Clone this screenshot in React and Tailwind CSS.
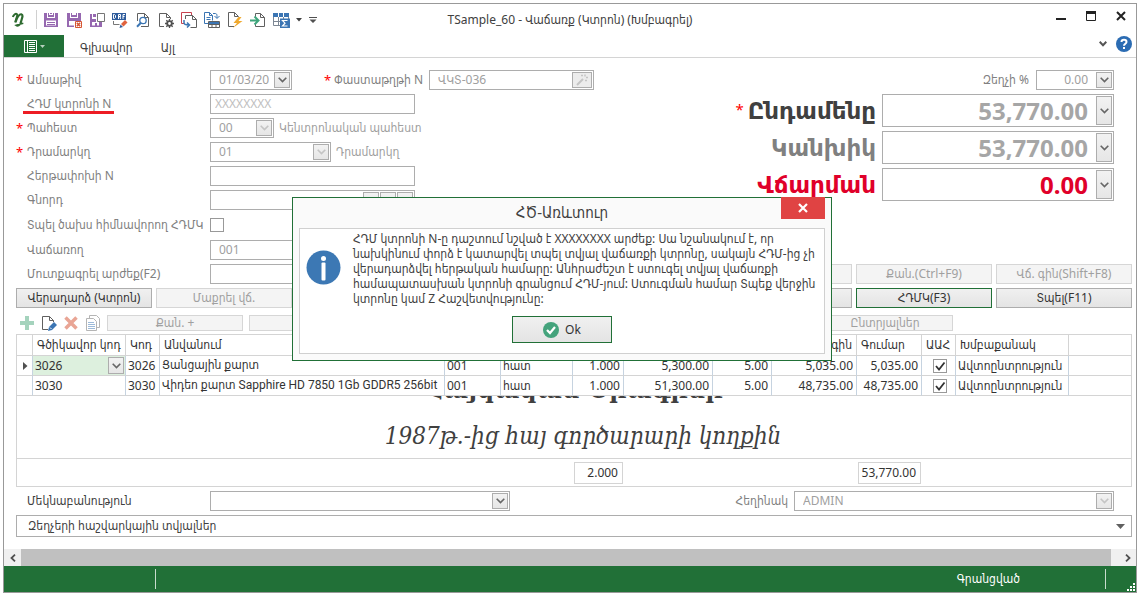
import React from "react";
import { useState } from "react";
import clsx from "clsx";

const ROWS = [
  {
    code: "3026",
    name: "Ցանցային քարտ",
    store: "001",
    unit: "հատ",
    qty: "1.000",
    price: "5,300.00",
    discount: "5.00",
    net: "5,035.00",
    total: "5,035.00",
  },
  {
    code: "3030",
    name: "Վիդեո քարտ Sapphire HD 7850 1Gb GDDR5 256bit",
    store: "001",
    unit: "հատ",
    qty: "1.000",
    price: "51,300.00",
    discount: "5.00",
    net: "48,735.00",
    total: "48,735.00",
  },
];

const HEADERS = [
  { text: "", width: "w-[16px]" },
  { text: "Գծիկավոր կոդ", width: "w-[93px]" },
  { text: "Կոդ", width: "w-[34px]" },
  { text: "Անվանում", width: "w-[285px]" },
  { text: "", width: "w-[56px]" },
  { text: "", width: "w-[72px]" },
  { text: "", width: "w-[51px]" },
  { text: "", width: "w-[89px]" },
  { text: "", width: "w-[59px]" },
  { text: "Զեղչված գին", width: "w-[85px]", right: true },
  { text: "Գումար", width: "w-[65px]" },
  { text: "ԱԱՀ", width: "w-[34px]" },
  { text: "Խմբաքանակ", width: "w-[113px]" },
];

const TOTALS = [
  { id: "total", label: "Ընդամենը", value: "53,770.00", text: "text-[#404040]", input: "text-[#a6a6a6]", required: true },
  { id: "cash", label: "Կանխիկ", value: "53,770.00", text: "text-[#808080]", input: "text-[#a6a6a6]" },
  { id: "due", label: "Վճարման", value: "0.00", text: "text-[#e0002a]", input: "text-[#e0002a]" },
];

function Chevron({ light }) {
  return (
    <svg width="9" height="6" viewBox="0 0 9 6" fill="none" stroke={light ? "#c4c4c4" : "#666"} strokeWidth="1.6">
      <path d="M0.7 0.8 L4.5 4.6 L8.3 0.8" />
    </svg>
  );
}

function DropBox({ light, className }) {
  return (
    <span
      className={clsx(
        "flex w-4 shrink-0 items-center justify-center border border-[#adadad] bg-linear-to-b from-[#f2f2f2] to-[#e6e6e6]",
        className
      )}
    >
      <Chevron light={light} />
    </span>
  );
}

function SelectField({ id, value, light, className }) {
  return (
    <div className={clsx("relative h-5 border border-[#adadad] bg-white", className)}>
      <select id={id} className="h-full w-full appearance-none pl-2 leading-[18px] text-[#a0a0a0] outline-none">
        <option>{value}</option>
      </select>
      <DropBox light={light} className="pointer-events-none absolute inset-y-px right-px" />
    </div>
  );
}

function TextField({ id, value, className, inputClass, children }) {
  return (
    <div className={clsx("flex border border-[#adadad] bg-white p-px", className)}>
      <input id={id} defaultValue={value} className={clsx("min-w-0 flex-1 bg-transparent outline-none", inputClass)} />
      {children}
    </div>
  );
}

function FormRow({ id, label, required, marked, children }) {
  return (
    <div className="flex h-5 items-center">
      <span className="w-[11px] text-[13px] leading-5 text-[#ff0000]">{required ? "*" : ""}</span>
      <label htmlFor={id} className="relative w-[183px] shrink-0 leading-5">
        {label}
        {marked && <span className="absolute -left-1 bottom-0 h-[3px] w-[91px] bg-[#ed1c24]" />}
      </label>
      {children}
    </div>
  );
}

function PushButton({ disabled, primary, className, onClick, children }) {
  return (
    <button
      disabled={disabled}
      onClick={onClick}
      className={clsx(
        "border whitespace-nowrap",
        disabled && "border-[#d6d6d6] bg-[#f4f4f4] text-[#a0a0a0]",
        !disabled && "bg-linear-to-b from-[#f0f0f0] to-[#e4e4e4] text-[#333]",
        !disabled && (primary ? "border-[#217037]" : "border-[#adadad]"),
        className
      )}
    >
      {children}
    </button>
  );
}

function Icon({ children, label }) {
  return (
    <button aria-label={label} className="h-4 w-4">
      <svg width="16" height="16" viewBox="0 0 16 16" fill="none">
        {children}
      </svg>
    </button>
  );
}

const Page = ({ d = "M11 15H2.5V1.5h6l4 4V8M8.5 1.5v4h4" }) => <path d={d} stroke="#606060" />;

function QuickAccess() {
  return (
    <div className="flex items-center gap-[7px]">
      <Icon label="Save">
        <path d="M1 1h3v5h8V1h3v14H1z" fill="#9668b0" />
        <path d="M5 1h1v2h4V1h1v4H5zM7 1h2v1H7z" fill="#9668b0" />
        <path d="M3 8.500h10v5H3z" fill="#fff" />
        <path d="M4 10.500h8M4 12.500h8" stroke="#9668b0" />
      </Icon>
      <Icon label="Save and close">
        <path d="M1 1h3v5h8V1h3v8H8v6H1z" fill="#9668b0" />
        <path d="M5 1h1v2h4V1h1v4H5z" fill="#9668b0" />
        <path d="M3 9h5v4.500H3z" fill="#fff" />
        <path d="M9.500 9.500h6v6h-6z" stroke="#d65532" fill="#fff" />
        <path d="M10.800 10.800l3.400 3.400M14.200 10.800l-3.400 3.400" stroke="#d65532" strokeWidth="1.500" />
      </Icon>
      <Icon label="Save and new">
        <path d="M1 2h2v5h4v3h6v5H1z" fill="#9668b0" />
        <path d="M3 10h7v3.500H3z" fill="#fff" />
        <path d="M6 11h2v3H6z" fill="#9668b0" />
        <path d="M8.500 1.500h7v8h-7z" stroke="#777" fill="#fff" />
        <path d="M4 2h3v3H4z" fill="#9668b0" />
      </Icon>
      <Icon label="Edit form">
        <path d="M0 1h14v7H0z" fill="#2f5c9c" />
        <path d="M1.500 6.500v-4h1l1 1v2l-1 1zM6.500 7V2.500h2v2h-2M8 4.500L8.500 7M11 7V2.500h2M11 4.500h1.500" stroke="#fff" />
        <path d="M1.500 9v3.500h6" stroke="#777" />
        <path d="M9 12l4-4 2.500 2.500-4 4z" fill="#e0623d" />
        <path d="M8.500 12.500l2.500 2.500-3.500 1z" fill="#2f5c9c" />
      </Icon>
      <Icon label="Preview">
        <Page d="M2.500 9V1.500h7l4 4v9H6M9.500 1.500v4h4" />
        <circle cx="8" cy="8.500" r="3.200" stroke="#3b75b3" strokeWidth="1.300" fill="#fff" />
        <path d="M5.700 11L2 14.700" stroke="#3b75b3" strokeWidth="2" />
      </Icon>
      <Icon label="Page setup">
        <Page d="M6 14.500H1.500V1.500h7l4 4V7M8.500 1.500v4h4" />
        <path d="M11.500 7v9M7 11.500h9M8.300 8.300l6.400 6.400M14.700 8.300l-6.400 6.400" stroke="#505050" strokeWidth="1.300" />
        <circle cx="11.500" cy="11.500" r="2.300" stroke="#505050" strokeWidth="1.800" fill="#fff" />
      </Icon>
      <Icon label="Create from">
        <path d="M3 11.500H.5V.5h10V3" stroke="#c8414e" />
        <path d="M4.500 7V3.500h7l4 4v8h-6M11.500 3.500v4h4" stroke="#606060" />
        <path d="M3 8v2.500c0 2 1 2.500 5 2.500M6 10.500L8.500 13 6 15.500" stroke="#3b75b3" strokeWidth="1.500" />
      </Icon>
      <Icon label="Copy rows">
        <path d="M4 11.500H.5v-11h5l3 3v5M5.500.5v3h3M2.500 5.500h4M2.500 7.500h4" stroke="#3b75b3" />
        <path d="M9 1.500h2c2 0 2 1 2 4.500M10.500 4L13 6.500 15.500 4" stroke="#3b75b3" />
        <path d="M4.500 9.500h11v6h-11zM4.500 12.500h11M8 9.500v6M12 9.500v6" stroke="#606060" />
        <path d="M5 10h10v2H5z" fill="#3b75b3" />
      </Icon>
      <Icon label="Run">
        <Page d="M7 14.500H1.500V.5h6l4 4M7.500.5v4h4" />
        <path d="M11.500 5L6.500 11h3.500l-4 5 9.500-7h-4l3-4z" fill="#f0a92e" />
      </Icon>
      <Icon label="Export">
        <path d="M5.500 5V1.500h5l4 4v9h-9V12M10.500 1.500v4h4" stroke="#606060" />
        <path d="M0 8.500h8M4.500 4.500l4 4-4 4" stroke="#3fa57c" strokeWidth="2" />
      </Icon>
      <button aria-label="Summary table" className="flex items-center gap-[6px]">
        <svg width="17" height="16" viewBox="0 0 17 16" fill="none">
          <path d="M.5 3.500h15v10H.5zM5.500 1v13M10.500 1v8M.5 9.500h15" stroke="#7d8794" />
          <path d="M0 1h16v4H0z" fill="#3b75b3" />
          <path d="M5.500 1v4M10.500 1v4" stroke="#fff" />
          <path d="M7 6.500h10V16H7z" fill="#3b75b3" />
          <path d="M14.500 8.500h-5l2.500 2.700-2.500 2.800h5" stroke="#fff" strokeWidth="1.200" />
        </svg>
        <svg width="6" height="4" viewBox="0 0 6 4">
          <path d="M0 0h6L3 3.500z" fill="#404040" />
        </svg>
      </button>
      <button aria-label="Customize">
        <svg width="8" height="6" viewBox="0 0 8 6">
          <path d="M0 0h8v1H0zM0.500 2.500h7L4 6z" fill="#505050" />
        </svg>
      </button>
    </div>
  );
}

function TitleBar() {
  return (
    <div className="relative flex h-[31px] items-center pl-2">
      <svg width="13" height="16" viewBox="0 0 13 16" fill="none">
        <path d="M.8 5C1.500 3 3.500 1.200 4.800 2c1 .8 0 3-.5 4.500L3.200 10.500" stroke="#2e6b30" strokeWidth="2" />
        <path d="M3.500 10C5.500 4.500 7.500 2 9.300 2.300c2 .5 1 3 .5 4.700L8.500 11.500" stroke="#2e6b30" strokeWidth="2.200" />
        <path d="M8.800 10.500c-.8 3-3 4.500-5 2.800l7.500-2" stroke="#2e6b30" strokeWidth="1.500" />
      </svg>
      <span className="mr-[6px] ml-[11px] h-[19px] w-px bg-[#d0d0d0]" />
      <QuickAccess />
      <h1 className="pointer-events-none absolute inset-x-0 text-center text-[12px] leading-4 text-[#404040]">
        TSample_60 - Վաճառք (Կտրոն) (Խմբագրել)
      </h1>
      <div className="mr-[10px] ml-auto flex items-center gap-5 pb-2">
        <button aria-label="Minimize">
          <svg width="10" height="11" viewBox="0 0 10 11">
            <path d="M0 8h10v2H0z" fill="#222" />
          </svg>
        </button>
        <button aria-label="Maximize">
          <svg width="10" height="10" viewBox="0 0 10 10">
            <path d="M.5 1.500h9v8h-9z" fill="none" stroke="#222" />
            <path d="M0 0h10v3H0z" fill="#222" />
          </svg>
        </button>
        <button aria-label="Close">
          <svg width="10" height="10" viewBox="0 0 10 10">
            <path d="M1 1l8 8M9 1L1 9" stroke="#222" strokeWidth="2" />
          </svg>
        </button>
      </div>
    </div>
  );
}

function Ribbon() {
  return (
    <nav className="flex h-[23px] items-center border-b border-[#d4d4d4] text-[#404040]">
      <button aria-label="Menu" className="flex h-full w-[60px] items-center justify-center gap-[3px] self-start bg-[#217037]">
        <svg width="13" height="13" viewBox="0 0 13 13" fill="none">
          <path d="M.5.5h12v12H.5zM3.500 0v13" stroke="#fff" />
          <path d="M5 2.500h6M5 4.500h6M5 6.500h6M5 8.500h6M5 10.500h6" stroke="#fff" />
        </svg>
        <svg width="5" height="3" viewBox="0 0 5 3">
          <path d="M0 0h5L2.500 3z" fill="#b9d1bf" />
        </svg>
      </button>
      <button className="ml-4 pt-1">Գլխավոր</button>
      <button className="ml-7 pt-1">Այլ</button>
      <div className="mr-1 ml-auto flex items-center gap-[9px] pb-1">
        <button aria-label="Collapse">
          <svg width="8" height="6" viewBox="0 0 8 6" fill="none" stroke="#555" strokeWidth="2">
            <path d="M0.7 0.8L4 4.200 7.300 0.800" />
          </svg>
        </button>
        <button aria-label="Help">
          <svg width="16" height="16" viewBox="0 0 16 16" fill="none">
            <circle cx="8" cy="8" r="8" fill="#2b6cb3" />
            <path d="M5.500 6c0-3 5-3 5 0 0 1.800-2.500 1.700-2.500 3.800" stroke="#fff" strokeWidth="2" />
            <path d="M7 11h2v2H7z" fill="#fff" />
          </svg>
        </button>
      </div>
    </nav>
  );
}

function HeaderForm() {
  return (
    <div className="flex justify-between text-[#808080]">
      <div className="flex flex-col gap-1">
        <FormRow id="date" label="Ամսաթիվ" required>
          <TextField id="date" value="01/03/20" className="h-5 w-[82px]" inputClass="pl-[7px] text-[#a0a0a0]">
            <button aria-label="Pick date" className="flex">
              <DropBox />
            </button>
          </TextField>
          <span className="ml-8 w-[10px] text-[13px] leading-5 text-[#ff0000]">*</span>
          <label htmlFor="doc" className="w-[95px] whitespace-nowrap">
            Փաստաթղթի N
          </label>
          <TextField id="doc" value="ՎԿՏ-036" className="h-5 w-[165px]" inputClass="pl-[7px] text-[#a0a0a0]">
            <button aria-label="Generate" className="flex w-5 items-center justify-center border border-[#adadad] bg-[#ececec]">
              <svg width="12" height="12" viewBox="0 0 12 12" fill="none" stroke="#c4c4c4">
                <path d="M1 11l6-6" strokeWidth="2" />
                <path d="M5 1.500h2M9 .5v2M9 6.500h2M10 3.500h2" strokeWidth="1.500" />
              </svg>
            </button>
          </TextField>
        </FormRow>
        <FormRow id="receipt" label="ՀԴՄ կտրոնի N" marked>
          <TextField id="receipt" value="XXXXXXXX" className="h-5 w-[205px]" inputClass="pl-[3px] text-[#c0c0c0]" />
        </FormRow>
        <FormRow id="store" label="Պահեստ" required>
          <SelectField id="store" value="00" light className="w-[64px]" />
          <span className="ml-[5px] text-[#a0a0a0]">Կենտրոնական պահեստ</span>
        </FormRow>
        <FormRow id="desk" label="Դրամարկղ" required>
          <SelectField id="desk" value="01" light className="w-[121px]" />
          <span className="ml-[5px] text-[#a0a0a0]">Դրամարկղ</span>
        </FormRow>
        <FormRow id="shift" label="Հերթափոխի N">
          <TextField id="shift" className="h-5 w-[205px]" inputClass="pl-[7px]" />
        </FormRow>
        <FormRow id="buyer" label="Գնորդ">
          <TextField id="buyer" className="h-5 w-[205px] gap-px" inputClass="pl-[7px]">
            <DropBox light />
            <DropBox light />
            <DropBox light />
          </TextField>
        </FormRow>
        <div className="flex h-[22px] items-center pl-[11px]">
          <label htmlFor="print" className="w-[183px] whitespace-nowrap leading-5">
            Տպել ծախս հիմնավորող ՀԴՄԿ
          </label>
          <input id="print" type="checkbox" className="h-[14px] w-[14px] appearance-none border border-[#999] bg-white" />
        </div>
        <FormRow id="seller" label="Վաճառող">
          <SelectField id="seller" value="001" light className="w-[205px]" />
        </FormRow>
        <FormRow id="entry" label="Մուտքագրել արժեք(F2)">
          <TextField id="entry" className="h-5 w-[205px]" />
        </FormRow>
      </div>

      <div className="flex flex-col justify-between">
        <div className="mr-[18px] flex flex-col items-end gap-1">
          <div className="flex items-center gap-[7px]">
            <label htmlFor="percent">Զեղչի %</label>
            <TextField id="percent" value="0.00" className="h-5 w-[78px]" inputClass="pr-2 text-right text-[#a0a0a0]">
              <button aria-label="Open calculator" className="flex">
                <DropBox />
              </button>
            </TextField>
          </div>
          {TOTALS.map((item) => (
            <div key={item.id} className="flex items-center gap-[6px]">
              <label
                htmlFor={item.id}
                className={clsx("flex font-['DejaVu_Sans'] text-[23px] leading-8 font-bold", item.text)}
              >
                {item.required && (
                  <span className="mr-1 font-['Noto_Sans'] text-[15px] leading-7 font-normal text-[#ff0000]">*</span>
                )}
                {item.label}
              </label>
              <TextField
                id={item.id}
                value={item.value}
                className="h-[33px] w-[232px]"
                inputClass={clsx("pr-2 text-right text-[24px] font-bold", item.input)}
              >
                <button aria-label="Open calculator" className="flex">
                  <DropBox />
                </button>
              </TextField>
            </div>
          ))}
        </div>
        <div className="grid w-[416px] grid-cols-3 gap-1">
          <PushButton disabled className="h-5" />
          <PushButton disabled className="h-5">
            Քան.(Ctrl+F9)
          </PushButton>
          <PushButton disabled className="h-5">
            Վճ. գին(Shift+F8)
          </PushButton>
        </div>
      </div>
    </div>
  );
}

function GridToolbar() {
  return (
    <div className="mt-[7px] flex h-4 items-center">
      <div className="flex w-[91px] gap-[6px] pl-[3px]">
        <Icon label="Add">
          <path d="M6 1h4v5h5v4h-5v5H6v-5H1V6h5z" fill="#a5d3bd" />
        </Icon>
        <Icon label="Edit">
          <Page d="M7 14.500H1.500V1.500h7l4 4V7M8.500 1.500v4h4" />
          <path d="M8 12l5-5 3 3-5 5-4 1z" fill="#3b75b3" />
          <path d="M9 12.500l1.500 1.500" stroke="#fff" />
        </Icon>
        <Icon label="Delete">
          <path d="M2.500 2.500l11 11M13.500 2.500l-11 11" stroke="#e9a595" strokeWidth="3.500" />
        </Icon>
        <Icon label="Copy">
          <path d="M4.500 3V.5h7l3 3v9H12" stroke="#b5b5b5" />
          <path d="M1.500 3.500h7l3 3v9h-10z" fill="#fff" stroke="#b5b5b5" />
          <path d="M3 7.500h6M3 9.500h7M3 11.500h7M3 13.500h7" stroke="#9dbad9" />
        </Icon>
      </div>
      <div className="flex gap-[6px]">
        <PushButton disabled className="h-4 w-[136px] leading-[14px]">
          Քան. +
        </PushButton>
        <PushButton disabled className="h-4 w-[136px]" />
        <PushButton disabled className="h-4 w-[136px]" />
        <PushButton disabled className="h-4 w-[136px]" />
        <PushButton disabled className="h-4 w-[136px]" />
        <PushButton disabled className="h-4 w-[136px] leading-[14px]">
          Ընտրյալներ
        </PushButton>
      </div>
    </div>
  );
}

function Cell({ right, className, children }) {
  return (
    <td
      className={clsx(
        "h-5 overflow-hidden border-r border-b border-r-[#c6d3e0] border-b-[#d4d4d4] p-0 leading-[19px] whitespace-nowrap",
        right ? "pr-[3px] text-right" : "pl-[2px]",
        className
      )}
    >
      {children}
    </td>
  );
}

function ItemsGrid() {
  return (
    <div className="mt-[3px] border border-[#d4d4d4] text-[#333]">
      <table className="w-full table-fixed border-separate border-spacing-0">
        <thead>
          <tr>
            {HEADERS.map((head, index) => (
              <th
                key={index}
                className={clsx(
                  "h-[21px] overflow-hidden border-r border-b border-[#d4d4d4] p-0 leading-5 font-normal whitespace-nowrap",
                  head.right ? "pr-1 text-right" : "pl-1 text-left",
                  head.width
                )}
              >
                {head.text}
              </th>
            ))}
            <th className="border-b border-[#d4d4d4] p-0" />
          </tr>
        </thead>
        <tbody>
          {ROWS.map((row, index) => (
            <tr key={row.code}>
              <Cell>
                {index === 0 && (
                  <svg className="ml-1" width="5" height="8" viewBox="0 0 5 8">
                    <path d="M0 0l4.500 4L0 8z" fill="#505050" />
                  </svg>
                )}
              </Cell>
              <Cell className={index === 0 ? "bg-[#ddf0de]" : ""}>
                <div className="flex h-[19px] justify-between py-px leading-[17px]">
                  {row.code}
                  {index === 0 && <DropBox className="mr-px" />}
                </div>
              </Cell>
              <Cell>{row.code}</Cell>
              <Cell className="font-['Roboto','DejaVu_Sans_Condensed',sans-serif]">{row.name}</Cell>
              <Cell>{row.store}</Cell>
              <Cell>{row.unit}</Cell>
              <Cell right>{row.qty}</Cell>
              <Cell right>{row.price}</Cell>
              <Cell right>{row.discount}</Cell>
              <Cell right>{row.net}</Cell>
              <Cell right>{row.total}</Cell>
              <Cell>
                <label className="relative mx-auto block h-[14px] w-[14px]">
                  <input
                    type="checkbox"
                    defaultChecked
                    aria-label="ԱԱՀ"
                    className="block h-[14px] w-[14px] appearance-none border border-[#999]"
                  />
                  <svg className="pointer-events-none absolute inset-0" width="14" height="14" viewBox="0 0 14 14">
                    <path d="M3 7l3 3.500L11.500 3.500" fill="none" stroke="#333" strokeWidth="1.800" />
                  </svg>
                </label>
              </Cell>
              <Cell>Ավտոընտրություն</Cell>
              <td className="border-b border-[#d4d4d4] p-0" />
            </tr>
          ))}
        </tbody>
      </table>
      {/* company slogan behind the empty part of the grid */}
      <div className="flex h-[62px] flex-col items-center overflow-hidden whitespace-nowrap text-[#404040]">
        <p className="-mt-[18px] font-['DejaVu_Serif'] text-[24px] leading-6 font-bold">Հայկական Ծրագրեր</p>
        <p className="mt-[14px] pl-[18px] font-['DejaVu_Serif_Condensed'] text-[24px] leading-10 italic">
          1987թ.-ից հայ գործարարի կողքին
        </p>
      </div>
      <div className="flex h-7 items-start border-t border-[#d4d4d4] pt-[3px] leading-[20px]">
        <span className="ml-[557px] h-[22px] w-[49px] border border-[#d4d4d4] pr-1 text-right">2.000</span>
        <span className="ml-[235px] h-[22px] w-[63px] border border-[#d4d4d4] pr-1 text-right">53,770.00</span>
      </div>
    </div>
  );
}

function MessageDialog({ closeDialog }) {
  return (
    <div
      role="dialog"
      aria-labelledby="dialog-title"
      className="absolute top-[197px] left-[292px] w-[540px] border border-[#217037] bg-[#fafafa] px-[6px] pb-[6px] text-[#404040]"
    >
      <div className="relative flex h-[30px] justify-center">
        <h2 id="dialog-title" className="text-[15px] leading-[29px]">
          ՀԾ-Առևտուր
        </h2>
        <button
          aria-label="Close dialog"
          onClick={closeDialog}
          className="absolute -top-px right-0 flex h-[22px] w-[44px] items-center justify-center bg-[#e04343]"
        >
          <svg width="10" height="10" viewBox="0 0 10 10">
            <path d="M1 1l8 8M9 1L1 9" stroke="#fff" strokeWidth="2.200" />
          </svg>
        </button>
      </div>
      <div className="flex h-[126px] flex-col items-center border border-[#d0d0d0] bg-white">
        <div className="flex w-full pt-[2px] pl-[6px]">
          <svg className="mt-[19px] shrink-0" width="35" height="35" viewBox="0 0 35 35">
            <circle cx="17.500" cy="17.500" r="17" fill="#3c78b4" />
            <circle cx="17.500" cy="8.500" r="2.500" fill="#fff" />
            <rect x="15.500" y="12.500" width="4" height="18" rx="1" fill="#fff" />
          </svg>
          <p className="ml-3 leading-[15px] whitespace-nowrap">
            ՀԴՄ կտրոնի N-ը դաշտում նշված է XXXXXXXX արժեք: Սա նշանակում է, որ
            <br />
            նախկինում փորձ է կատարվել տպել տվյալ վաճառքի կտրոնը, սակայն ՀԴՄ-ից չի
            <br />
            վերադարձվել հերթական համարը: Անհրաժեշտ է ստուգել տվյալ վաճառքի
            <br />
            համապատասխան կտրոնի գրանցում ՀԴՄ-յում: Ստուգման համար Տպեք վերջին
            <br />
            կտրոնը կամ Z Հաշվետվությունը:
          </p>
        </div>
        <PushButton
          primary
          onClick={closeDialog}
          className="mt-[10px] flex h-[27px] w-[100px] shrink-0 items-center justify-center gap-[6px]"
        >
          <svg width="16" height="16" viewBox="0 0 16 16">
            <circle cx="8" cy="8" r="8" fill="#44a37c" />
            <path d="M4 8l3 3 5-6" fill="none" stroke="#fff" strokeWidth="2.200" />
          </svg>
          Ok
        </PushButton>
      </div>
    </div>
  );
}

function App() {
  const [openDialog, setOpenDialog] = useState(true);

  return (
    <div className="relative bg-white p-[3px] font-['Noto_Sans','DejaVu_Sans_Condensed',sans-serif] text-[12px] leading-4">
      <div className="border border-[#999]">
        <TitleBar />
        <Ribbon />
        <main className="px-3 pt-3 pr-1">
          <HeaderForm />
          <div className="mt-1 grid grid-cols-8 gap-1">
            <PushButton className="h-5">Վերադարձ (Կտրոն)</PushButton>
            <PushButton disabled className="h-5">
              Մաքրել վճ.
            </PushButton>
            <PushButton className="col-start-6 h-5" />
            <PushButton primary className="h-5">
              ՀԴՄԿ(F3)
            </PushButton>
            <PushButton className="h-5">Տպել(F11)</PushButton>
          </div>
          <GridToolbar />
          <ItemsGrid />
          <div className="mt-1 mr-[18px] flex items-center text-[#404040]">
            <label htmlFor="comment" className="w-[194px] pl-[11px]">
              Մեկնաբանություն
            </label>
            <SelectField id="comment" className="w-[300px]" />
            <label htmlFor="author" className="mr-[6px] ml-auto text-[#808080]">
              Հեղինակ
            </label>
            <SelectField id="author" value="ADMIN" light className="w-[320px]" />
          </div>
          <button className="mt-1 flex h-[22px] w-full items-center justify-between border border-[#adadad] pr-[6px] pl-[11px] text-[#404040]">
            Զեղչերի հաշվարկային տվյալներ
            <svg width="9" height="5" viewBox="0 0 9 5">
              <path d="M0 0h9L4.500 5z" fill="#606060" />
            </svg>
          </button>
        </main>
        <div className="mt-3 flex h-[17px] items-stretch bg-[#f0f0f0]">
          <button aria-label="Scroll left" className="flex w-[17px] items-center justify-center">
            <svg width="6" height="8" viewBox="0 0 6 8">
              <path d="M5 .7L1.500 4 5 7.300" fill="none" stroke="#505050" strokeWidth="1.800" />
            </svg>
          </button>
          <div className="mr-2 flex-1 bg-[#c0c0c0]" />
          <button aria-label="Scroll right" className="flex w-[17px] items-center justify-center">
            <svg width="6" height="8" viewBox="0 0 6 8">
              <path d="M1 .7L4.500 4 1 7.300" fill="none" stroke="#505050" strokeWidth="1.800" />
            </svg>
          </button>
        </div>
        <footer className="flex h-[26px] items-center bg-[#217037] font-medium text-white">
          <span className="ml-[151px] h-5 w-px bg-[#c8dccd]" />
          <span className="mr-[85px] ml-auto">Գրանցված</span>
          <span className="h-5 w-px bg-[#c8dccd]" />
          <svg className="mr-px ml-[21px] self-end" width="8" height="9" viewBox="0 0 8 9">
            <path d="M6 0h2v2H6zM3 3h2v2H3zM6 3h2v2H6zM0 6h2v2H0zM3 6h2v2H3zM6 6h2v2H6z" fill="#fff" />
          </svg>
        </footer>
      </div>
      {openDialog && <MessageDialog closeDialog={() => setOpenDialog(false)} />}
    </div>
  );
}

export default App;
